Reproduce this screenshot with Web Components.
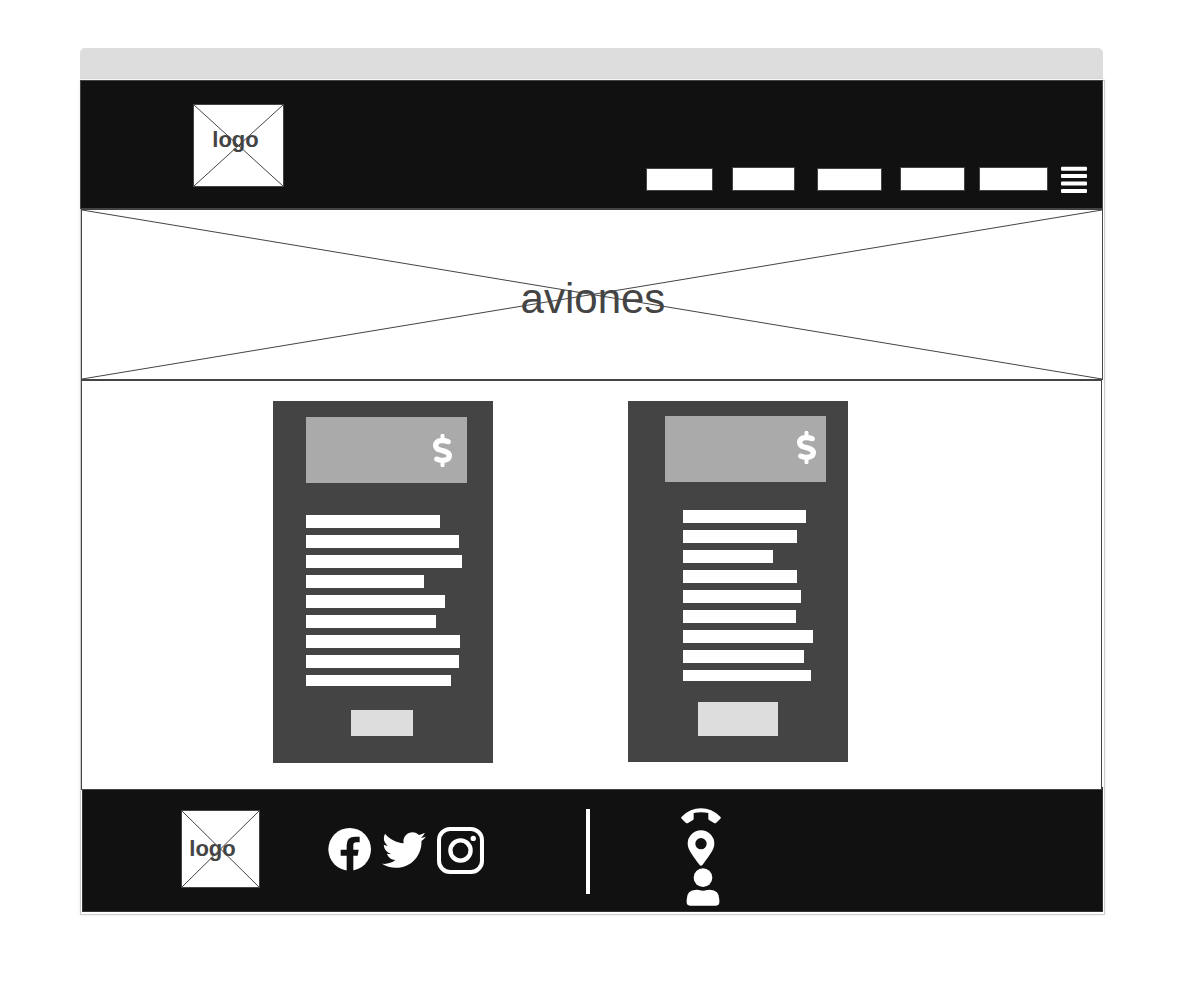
<!DOCTYPE html>
<html lang="es">
<head>
<meta charset="utf-8">
<meta name="viewport" content="width=device-width, initial-scale=1">
<title>Aviones</title>
<style>
  body { margin: 0; background: #fff; color: #444; font-family: "Liberation Sans", Arial, sans-serif; }
</style>
</head>
<body>
<wire-window>
  <site-header></site-header>
  <hero-banner>aviones</hero-banner>
  <card-list>
    <price-card class="first" lines="134 153 156 118 139 130 154 153 145"></price-card>
    <price-card class="second" lines="123 114 90 114 118 113 130 121 128"></price-card>
  </card-list>
  <site-footer></site-footer>
</wire-window>

<script>
  const define = (name, html, setup) => {
    const template = document.createElement('template');
    template.innerHTML = '<style>*{box-sizing:border-box}:host{box-sizing:border-box}svg{display:block}</style>' + html;
    customElements.define(name, class extends HTMLElement {
      constructor() {
        super();
        this.attachShadow({ mode: 'open' }).append(template.content.cloneNode(true));
      }
      connectedCallback() { if (setup) setup(this, this.shadowRoot); }
    });
  };

  /* Placeholder box with two diagonals behind its caption */
  define('cross-box', `
    <style>
      :host { display: grid; background: #fff; border: 1px solid #444; }
      svg, .caption { grid-area: 1 / 1; }
      svg { width: 100%; height: 100%; min-width: 0; min-height: 0; }
      .frame { display: grid; grid-template: minmax(0, 1fr) / minmax(0, 1fr); min-height: 0; }
      .caption { place-self: center; padding: var(--caption-pad, 0); white-space: nowrap; z-index: 1; }
    </style>
    <div class="frame">
      <svg viewBox="0 0 100 100" preserveAspectRatio="none" aria-hidden="true">
        <path d="M0 0 100 100M100 0 0 100" fill="none" stroke="#444" stroke-width="1" vector-effect="non-scaling-stroke"/>
      </svg>
      <div class="caption"><slot></slot></div>
    </div>`);

  define('wire-window', `
    <style>
      :host { display: block; padding: 48px 78px 78px 80px; }
      .bar { height: 31px; margin: 0 2px 1px 0; background: #ddd; border-radius: 5px 5px 0 0; }
      .page { padding-bottom: 3px; box-shadow: inset 0 0 0 1px #ccc, 0 0 4px rgba(0,0,0,.08); }
    </style>
    <div class="bar"></div>
    <div class="page"><slot></slot></div>`);

  define('site-header', `
    <style>
      :host { display: block; margin-right: 2px; }
      header { display: flex; justify-content: space-between; align-items: flex-start; height: 129px;
        padding: 23px 14px 0 112px; background: #111; border: 1px solid #444; }
      cross-box { width: 91px; height: 83px; font-size: 22px; font-weight: bold; line-height: 24px; --caption-pad: 0 6px 12px 0; }
      nav { display: grid; grid-template-columns: 86px 85px 83px 79px 81px 28px; align-items: end; margin-top: 62px; height: 25px; }
      a { display: block; height: 23px; background: #fff; border: 1px solid #444; }
      a.tall { height: 24px; }
      button { width: 28px; height: 28px; padding: 0; border: 0; background: none; margin-bottom: -3px; }
    </style>
    <header>
      <cross-box>logo</cross-box>
      <nav>
        <a href="#1" aria-label="1" style="width:67px"></a>
        <a href="#2" aria-label="2" class="tall" style="width:63px"></a>
        <a href="#3" aria-label="3" style="width:65px"></a>
        <a href="#4" aria-label="4" class="tall" style="width:65px"></a>
        <a href="#5" aria-label="5" class="tall" style="width:69px"></a>
        <button type="button" aria-label="menu">
          <svg width="28" height="28" viewBox="0 0 28 28" fill="#fff"><rect x="1" y=".7" width="26" height="4" rx="1"/><rect x="1" y="8" width="26" height="4" rx="1"/><rect x="1" y="15.5" width="26" height="4" rx="1"/><rect x="1" y="23" width="26" height="4" rx="1"/></svg>
        </button>
      </nav>
    </header>`);

  define('hero-banner', `
    <style>
      :host { display: block; margin: 0 2px 0 1px; }
      cross-box { height: 171px; --caption-pad: 8px 0 0 2px; }
      h1 { margin: 0; font-size: 42px; line-height: 48px; font-weight: normal; }
    </style>
    <cross-box><h1><slot></slot></h1></cross-box>`);

  define('card-list', `
    <style>
      :host { display: block; position: relative; z-index: 1; margin: 0 3px 0 1px; }
      main { display: flex; align-items: flex-start; gap: 135px; padding: 20px 0 26px 191px;
        background: #fff; border: 1px solid #444; }
    </style>
    <main><slot></slot></main>`);

  define('price-card', `
    <style>
      :host { display: block; flex: none; width: 220px; background: #444; }
      :host(.first) { padding: 16px 26px 27px 33px; --price-pad: 17px 15px 0 0; --lines-margin: 32px 0 24px;
        --button-margin: 45px; --button-width: 62px; --button-height: 26px; }
      :host(.second) { padding: 15px 22px 26px 37px; --price-pad: 15px 10px 0 0; --lines-margin: 28px 0 21px 18px;
        --button-margin: 33px; --button-width: 80px; --button-height: 34px; }
      .price { display: flex; justify-content: flex-end; align-items: flex-start; height: 66px; padding: var(--price-pad); background: #aaa; }
      .lines { display: grid; gap: 7px; margin: var(--lines-margin); }
      .lines i { display: block; height: 13px; background: #fff; }
      .lines i:last-child { height: 11px; }
      button { display: block; width: var(--button-width); height: var(--button-height);
        margin: 0 0 0 var(--button-margin); padding: 0; border: 0; background: #ddd; }
    </style>
    <div class="price">
      <svg width="19" height="33" viewBox="519 132 57 99" fill="none" stroke="#fff" role="img" aria-label="precio">
        <path d="M547.5 137V150M547.5 213V226" stroke-width="12" stroke-linecap="round"/>
        <path d="M564 155Q555 151 543 152Q527 154 527 167Q528 177 541 180L555 184Q568 188 568 198Q567 211 547 211Q537 211 530 207" stroke-width="16" stroke-linejoin="round"/>
        <path d="M564 155H565M530 207H531" stroke-width="15" stroke-linecap="round"/>
      </svg>
    </div>
    <div class="lines"></div>
    <button type="button" aria-label="ver"></button>`,
    (host, root) => {
      root.querySelector('.lines').replaceChildren(...host.getAttribute('lines').split(' ').map(width => {
        const line = document.createElement('i');
        line.style.width = width + 'px';
        return line;
      }));
    });

  define('site-footer', `
    <style>
      :host { display: block; margin: -3px 2px 0; }
      footer { display: flex; align-items: flex-start; height: 125px; padding: 22px 0 0 98px;
        background: #111; border: 1px solid #333; }
      cross-box { flex: none; width: 79px; height: 78px; font-size: 22px; font-weight: bold; line-height: 24px; --caption-pad: 0 16px 0 0; }
      a { display: block; }
      .social { display: flex; align-items: center; gap: 11px; height: 48px; margin: 16px 0 0 68px; }
      .divider { width: 4px; height: 85px; margin: -1px 0 0 102px; background: #fff; }
      .contact { display: grid; justify-items: center; margin: -2px 0 0 91px; }
      .contact a:nth-child(2) { margin-top: 6px; }
      .contact a:nth-child(3) { margin-top: 2px; padding-left: 4px; }
    </style>
    <footer>
      <cross-box>logo</cross-box>
      <div class="social">
        <a href="#facebook" aria-label="Facebook"><svg width="43" height="48" viewBox="52 46 129 144">
          <circle cx="117" cy="116" r="64" fill="#fff"/>
          <path d="M108 184V135H90V117H108V103Q108 78 133 78H147V95H137Q128 95 128 103V117H144L141 135H128V184Z" fill="#111"/></svg></a>
        <a href="#twitter" aria-label="Twitter"><svg width="44" height="44" viewBox="0 0 512 512"><path fill="#fff" d="M459.37 151.716c.325 4.548.325 9.097.325 13.645 0 138.72-105.583 298.558-298.558 298.558-59.452 0-114.68-17.219-161.137-47.106 8.447.974 16.568 1.299 25.34 1.299 49.055 0 94.213-16.568 130.274-44.832-46.132-.975-84.792-31.188-98.112-72.772 6.498.974 12.995 1.624 19.818 1.624 9.421 0 18.843-1.3 27.614-3.573-48.081-9.747-84.143-51.98-84.143-102.985v-1.299c13.969 7.797 30.214 12.67 47.431 13.319-28.264-18.843-46.781-51.005-46.781-87.391 0-19.492 5.197-37.36 14.294-52.954 51.655 63.675 129.3 105.258 216.365 109.807-1.624-7.797-2.599-15.918-2.599-24.04 0-57.828 46.782-104.934 104.934-104.934 30.213 0 57.502 12.67 76.67 33.137 23.715-4.548 46.456-13.32 66.599-25.34-7.798 24.366-24.366 44.833-46.132 57.827 21.117-2.273 41.584-8.122 60.426-16.243-14.292 20.791-32.161 39.308-52.628 54.253z"/></svg></a>
        <a href="#instagram" aria-label="Instagram"><svg width="47" height="47" viewBox="380 51 140 140" fill="none" stroke="#fff">
          <rect x="386" y="57" width="128" height="128" rx="33" stroke-width="12"/>
          <circle cx="450" cy="121" r="30" stroke-width="13"/><circle cx="488" cy="85" r="8" fill="#fff" stroke="none"/></svg></a>
      </div>
      <div class="divider"></div>
      <div class="contact">
        <a href="#telefono" aria-label="Teléfono"><svg width="40" height="16" viewBox="333 83 120 48" fill="#fff">
          <path d="M335 109Q361 84 393 84Q425 84 451 109Q454 112 451 115L438 128Q435 130 432 128L417 119Q415 118 415 115V98Q393 93 371 98V115Q371 118 369 119L354 128Q351 130 348 128L335 115Q332 112 335 109Z"/></svg></a>
        <a href="#mapa" aria-label="Mapa"><svg width="28" height="36" viewBox="351 149 84 108" fill="#fff">
          <path fill-rule="evenodd" d="M393 150A40 40 0 0 1 433 190C433 209 414 230 397 254Q393 258 389 254C372 230 353 209 353 190A40 40 0 0 1 393 150ZM393 173A17 17 0 1 0 393 207A17 17 0 1 0 393 173Z"/></svg></a>
        <a href="#usuario" aria-label="Usuario"><svg width="34" height="38" viewBox="348 265 102 114" fill="#fff">
          <circle cx="399" cy="294" r="28"/>
          <path d="M350 360Q350 330 379 330Q384 330 387 331Q399 335 411 331Q414 330 419 330Q448 330 448 360V368Q448 378 438 378H360Q350 378 350 368Z"/></svg></a>
      </div>
    </footer>`);
</script>
</body>
</html>
